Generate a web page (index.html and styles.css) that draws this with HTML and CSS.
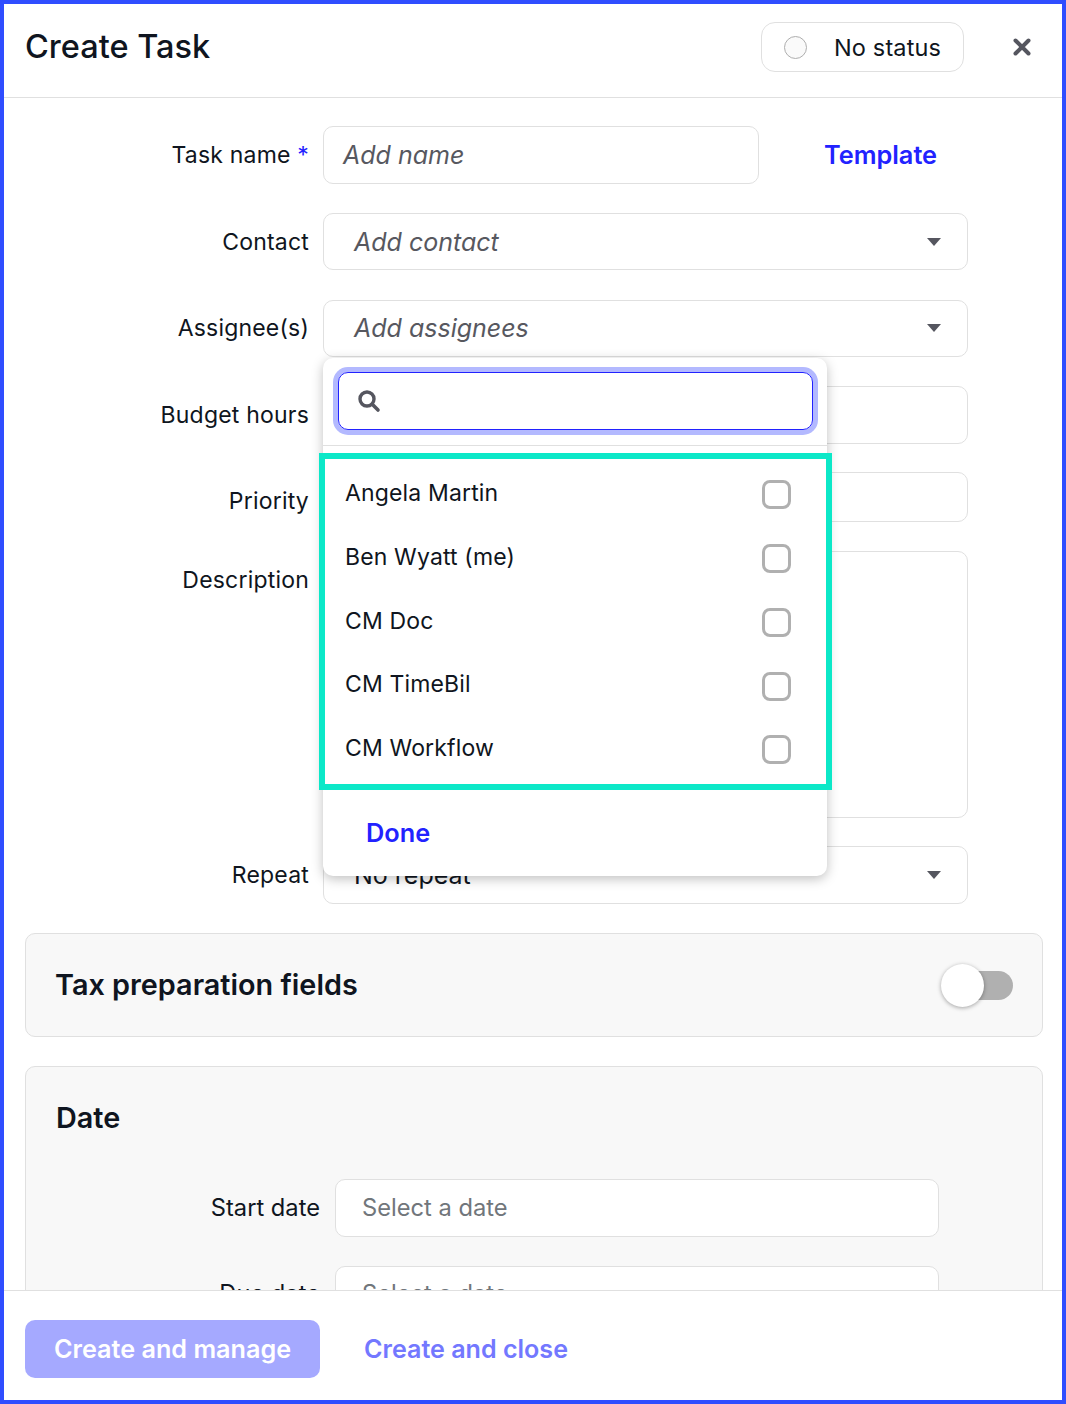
FILE: index.html
```html
<!DOCTYPE html>
<html lang="en">
<head>
<meta charset="utf-8">
<title>Create Task</title>
<link rel="stylesheet" href="styles.css">
</head>
<body>
<div class="frame">
  <header class="header">
    <h1 class="title">Create Task</h1>
    <div class="status"><span class="status-dot"></span><span>No status</span></div>
    <svg class="close" width="18" height="18" viewBox="0 0 18 18"><path d="M2.5 2.5L15.5 15.5M15.5 2.5L2.5 15.5" stroke="#55565f" stroke-width="4" stroke-linecap="round" fill="none"/></svg>
  </header>
  <main class="content">
    <div class="row row-name">
      <div class="label">Task name <span class="req">*</span></div>
      <div class="field field-name"><span class="ph">Add name</span></div>
      <a class="template">Template</a>
    </div>
    <div class="row">
      <div class="label">Contact</div>
      <div class="field field-select"><span class="ph">Add contact</span><svg class="caret" width="16" height="8" viewBox="0 0 16 8"><path d="M1 0H15L8 8Z" fill="#55565f"/></svg></div>
    </div>
    <div class="row row-assignee">
      <div class="label">Assignee(s)</div>
      <div class="field field-select"><span class="ph">Add assignees</span><svg class="caret" width="16" height="8" viewBox="0 0 16 8"><path d="M1 0H15L8 8Z" fill="#55565f"/></svg></div>
      <div class="dropdown">
        <div class="search-wrap">
          <div class="search">
            <svg width="24" height="24" viewBox="0 0 24 24"><circle cx="10" cy="10" r="7" stroke="#55565f" stroke-width="3.4" fill="none"/><path d="M15.5 15.5L21 21" stroke="#55565f" stroke-width="3.6" stroke-linecap="round"/></svg>
          </div>
        </div>
        <div class="list">
          <div class="item"><span>Angela Martin</span><span class="check"></span></div>
          <div class="item"><span>Ben Wyatt (me)</span><span class="check"></span></div>
          <div class="item"><span>CM Doc</span><span class="check"></span></div>
          <div class="item"><span>CM TimeBil</span><span class="check"></span></div>
          <div class="item"><span>CM Workflow</span><span class="check"></span></div>
        </div>
        <div class="done">Done</div>
      </div>
    </div>
    <div class="row">
      <div class="label">Budget hours</div>
      <div class="field"></div>
    </div>
    <div class="row row-priority">
      <div class="label">Priority</div>
      <div class="field"></div>
    </div>
    <div class="row row-desc">
      <div class="label">Description</div>
      <div class="field"></div>
    </div>
    <div class="row">
      <div class="label">Repeat</div>
      <div class="field field-select"><span class="val">No repeat</span><svg class="caret" width="16" height="8" viewBox="0 0 16 8"><path d="M1 0H15L8 8Z" fill="#55565f"/></svg></div>
    </div>
    <section class="card card-tax">
      <h2 class="card-title">Tax preparation fields</h2>
      <div class="toggle"><span class="knob"></span></div>
    </section>
    <section class="card card-date">
      <h2 class="card-title">Date</h2>
      <div class="date-rows">
        <div class="date-row"><div class="date-label">Start date</div><div class="date-field">Select a date</div></div>
        <div class="date-row"><div class="date-label">Due date</div><div class="date-field">Select a date</div></div>
      </div>
    </section>
  </main>
  <footer class="footer">
    <button class="btn-primary">Create and manage</button>
    <a class="btn-link">Create and close</a>
  </footer>
</div>
</body>
</html>
```
FILE: styles.css
```css
* { box-sizing: border-box; }
html, body { margin: 0; padding: 0; }
body { font-family: Inter, "Liberation Sans", sans-serif; color: #0f1520; background: #fff; }
.frame {
  width: 1066px; height: 1404px; border: 4px solid #2f4dff;
  display: flex; flex-direction: column; overflow: hidden; background: #fff;
}
.header {
  height: 94px; flex: none; border-bottom: 1px solid #e0e0e0;
  display: flex; align-items: center; padding: 0 31px 7px 21px;
}
.title { margin: -2px 0 0; font-size: 32.5px; font-weight: 450; flex: 1; }
.status {
  width: 203px; height: 50px; border: 1px solid #e0e0e0; border-radius: 14px;
  display: flex; align-items: center; gap: 27px; padding-left: 22px; font-size: 23.5px; letter-spacing: .15px;
  margin-right: 49px;
}
.status-dot { width: 23px; height: 23px; border-radius: 50%; border: 1px solid #aeaeae; background: #fafafa; }
.close { flex: none; }
.content {
  flex: 1; min-height: 0; overflow: hidden; padding: 28.4px 19px 0 21px;
  display: flex; flex-direction: column; gap: 28.8px;
}
.row { display: flex; align-items: center; height: 57.6px; position: relative; flex: none; }
.row-assignee { margin-top: .4px; }
.row-priority { height: 50px; }
.row-desc { height: 266.4px; align-items: flex-start; }
.row-desc .label { margin-top: 15px; }
.row-priority .label { margin-top: 8px; }
.label { width: 284px; flex: none; text-align: right; font-size: 23px; letter-spacing: .2px; white-space: nowrap; }
.req { color: #2222ff; }
.field {
  width: 645px; height: 100%; margin-left: 14px; border: 1px solid #e0e0e0; border-radius: 10px;
  display: flex; align-items: center; background: #fff; font-size: 25px;
}
.field-name { width: 436px; padding-left: 19px; }
.field-select { padding: 0 25px 0 30px; justify-content: space-between; }
.ph { font-style: italic; color: #57585f; }
.val { font-size: 25px; }
.template { margin: -2px 0 0 65px; font-size: 25.3px; font-weight: 600; color: #2222ff; }
.dropdown {
  position: absolute; z-index: 5; left: 298px; top: 58.4px; width: 504px; height: 518px;
  background: #fff; border-radius: 10px; box-shadow: 0 3px 12px rgba(0,0,0,.25);
}
.search-wrap { height: 88px; padding: 14px 14px 0 15px; border-bottom: 1px solid #e0e0e0; }
.search {
  width: 475px; height: 58px; border: 1.5px solid #2222ff; border-radius: 10px;
  box-shadow: 0 0 0 5px #b3b9ff; display: flex; align-items: center; padding-left: 18px;
}
.list { position: relative; margin-top: 15.3px; height: 318.7px; }
.list::after {
  content: ""; position: absolute; left: -3.7px; right: -5.3px; top: -7.8px; bottom: -10.3px;
  border: 6.5px solid #0ce8c8; pointer-events: none;
}
.item {
  height: 63.75px; display: flex; align-items: center; justify-content: space-between;
  padding: 0 36px 0 22px; font-size: 23px; letter-spacing: .15px;
}
.check { width: 29px; height: 29px; border: 3px solid #b0b0b0; border-radius: 8px; background: #fff; margin-top: 3.4px; }
.done { padding: 37px 0 0 43px; font-size: 25.3px; font-weight: 600; color: #2222ff; }
.card { background: #f8f8f8; border: 1px solid #e0e0e0; border-radius: 10px; flex: none; }
.card-tax { height: 104px; display: flex; align-items: center; justify-content: space-between; padding: 0 29px; }
.card-title { margin: 0; font-size: 28.8px; font-weight: 600; }
.toggle { position: relative; width: 58px; height: 29px; margin-top: 1px; border-radius: 15px; background: #b0b0b0; }
.knob {
  position: absolute; left: -14px; top: -7px; width: 43px; height: 43px; border-radius: 50%;
  background: #fff; box-shadow: 0 1px 4px rgba(0,0,0,.35);
}
.card-date { padding: 33px 30px 40px; height: 400px; }
.date-rows { margin-top: 44px; display: flex; flex-direction: column; gap: 29px; }
.date-row { display: flex; align-items: center; height: 58px; }
.date-row:last-child .date-label, .date-row:last-child .date-field { padding-bottom: 3px; }
.date-label { width: 264px; text-align: right; font-size: 23.7px; flex: none; }
.date-field {
  width: 604px; height: 58px; margin-left: 15px; border: 1px solid #e0e0e0; border-radius: 10px;
  background: #fff; display: flex; align-items: center; padding-left: 26px; font-size: 23.7px; color: #71767b;
}
.footer {
  height: 110px; flex: none; border-top: 1px solid #e0e0e0; background: #fff;
  display: flex; align-items: center; padding: 7px 0 0 21px; position: relative; z-index: 2;
}
.btn-primary {
  width: 295px; height: 58px; border: 0; border-radius: 10px; background: #a5a9ff; color: #fff;
  font: 600 25.2px Inter, "Liberation Sans", sans-serif;
}
.btn-link { margin-left: 44px; font-size: 25.1px; font-weight: 600; color: #7378ff; }
```
